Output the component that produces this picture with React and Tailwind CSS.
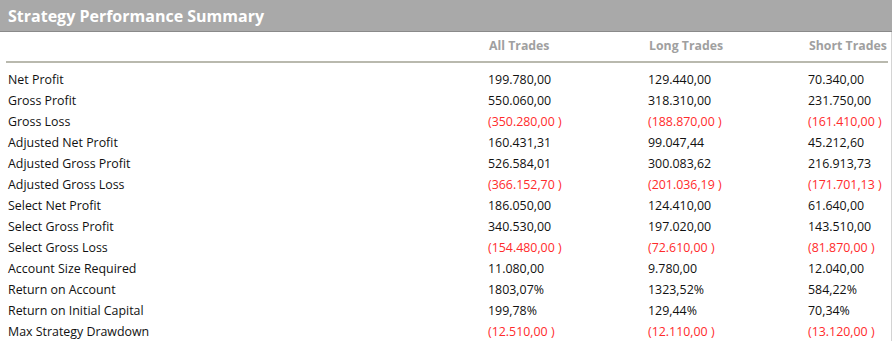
import React from "react";

const rows = [
  ["Net Profit", "199.780,00", "129.440,00", "70.340,00"],
  ["Gross Profit", "550.060,00", "318.310,00", "231.750,00"],
  ["Gross Loss", "(350.280,00 )", "(188.870,00 )", "(161.410,00 )", true],
  ["Adjusted Net Profit", "160.431,31", "99.047,44", "45.212,60"],
  ["Adjusted Gross Profit", "526.584,01", "300.083,62", "216.913,73"],
  ["Adjusted Gross Loss", "(366.152,70 )", "(201.036,19 )", "(171.701,13 )", true],
  ["Select Net Profit", "186.050,00", "124.410,00", "61.640,00"],
  ["Select Gross Profit", "340.530,00", "197.020,00", "143.510,00"],
  ["Select Gross Loss", "(154.480,00 )", "(72.610,00 )", "(81.870,00 )", true],
  ["Account Size Required", "11.080,00", "9.780,00", "12.040,00"],
  ["Return on Account", "1803,07%", "1323,52%", "584,22%"],
  ["Return on Initial Capital", "199,78%", "129,44%", "70,34%"],
  ["Max Strategy Drawdown", "(12.510,00 )", "(12.110,00 )", "(13.120,00 )", true],
];

export default function App() {
  return (
    <div
      className="w-[892px] h-[341px] bg-white overflow-hidden"
      style={{ fontFamily: '"Open Sans", "Noto Sans", sans-serif' }}
    >
      <div className="h-[32px] bg-[#a9a9a9] border-b border-[#8a8a8a] flex items-center pl-[8px]">
        <span className="text-white font-bold text-[16px] leading-none">
          Strategy Performance Summary
        </span>
      </div>
      <div className="border-r border-[#d4d4d4] h-[309px]">
        <div className="grid grid-cols-[480px_160px_160px_1fr] pl-[8px] h-[29px] items-center text-[12.3px] font-bold text-[#a0a0a0]">
          <div />
          <div className="pl-[1px]">All Trades</div>
          <div className="pl-[1px]">Long Trades</div>
          <div className="pl-[1px]">Short Trades</div>
        </div>
        <div className="ml-[6px] mr-[3px] h-[2px] bg-[#b9b9ae]" />
        <div className="pt-[7px]">
          {rows.map((r) => (
            <div
              key={r[0]}
              className="grid grid-cols-[480px_160px_160px_1fr] pl-[8px] h-[21px] items-center text-[12.4px] text-[#111]"
            >
              <div>{r[0]}</div>
              <div className={r[4] ? "text-[#ff2b2b]" : ""}>{r[1]}</div>
              <div className={r[4] ? "text-[#ff2b2b]" : ""}>{r[2]}</div>
              <div className={r[4] ? "text-[#ff2b2b]" : ""}>{r[3]}</div>
            </div>
          ))}
        </div>
      </div>
    </div>
  );
}
